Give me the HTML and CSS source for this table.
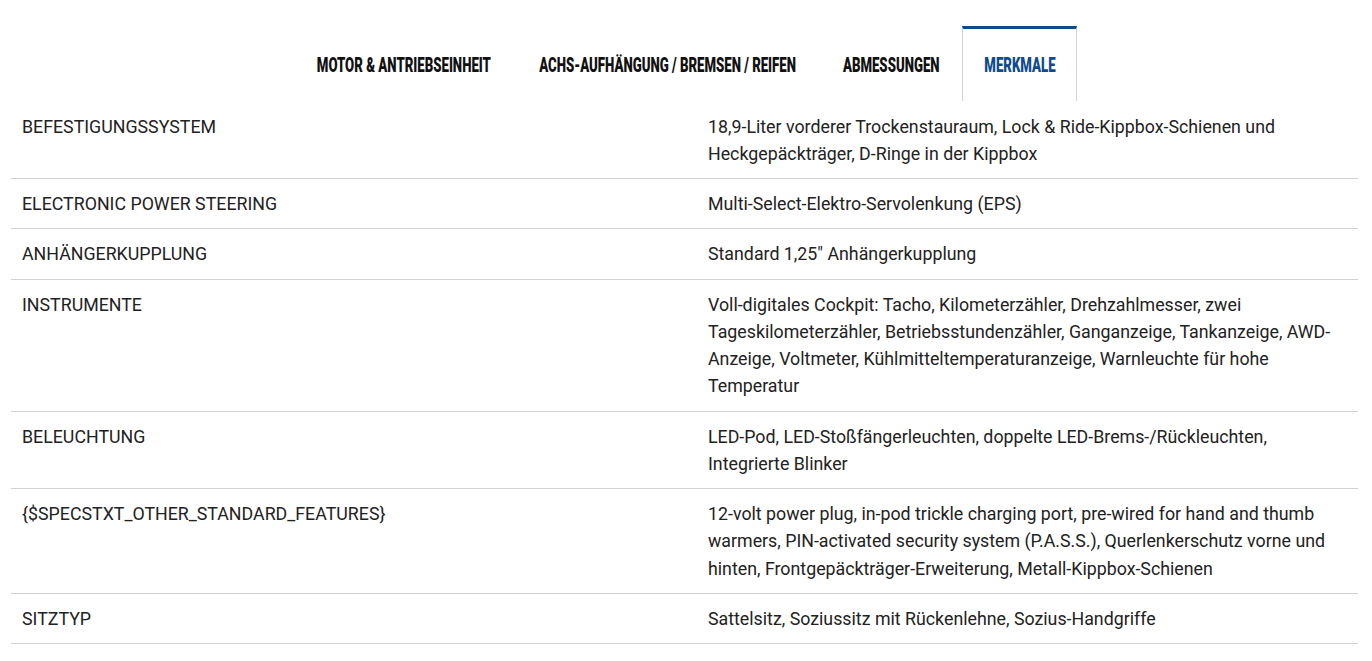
FILE: index.html
```html
<!DOCTYPE html>
<html lang="de">
<head>
<meta charset="utf-8">
<title>Merkmale</title>
<link rel="stylesheet" href="styles.css">
</head>
<body>
<nav class="tabs">
  <div class="tab tab-motor"><span class="tab-label">MOTOR &amp; ANTRIEBSEINHEIT</span></div>
  <div class="tab tab-achs"><span class="tab-label">ACHS-AUFHÄNGUNG / BREMSEN / REIFEN</span></div>
  <div class="tab tab-abm"><span class="tab-label">ABMESSUNGEN</span></div>
  <div class="tab tab-merk active"><span class="tab-label">MERKMALE</span></div>
</nav>
<div class="specs">
  <div class="row"><div class="label">BEFESTIGUNGSSYSTEM</div><div class="value">18,9-Liter vorderer Trockenstauraum, Lock &amp; Ride-Kippbox-Schienen und Heckgepäckträger, D-Ringe in der Kippbox</div></div>
  <div class="row"><div class="label">ELECTRONIC POWER STEERING</div><div class="value">Multi-Select-Elektro-Servolenkung (EPS)</div></div>
  <div class="row"><div class="label">ANHÄNGERKUPPLUNG</div><div class="value">Standard 1,25" Anhängerkupplung</div></div>
  <div class="row"><div class="label">INSTRUMENTE</div><div class="value">Voll-digitales Cockpit: Tacho, Kilometerzähler, Drehzahlmesser, zwei Tageskilometerzähler, Betriebsstundenzähler, Ganganzeige, Tankanzeige, AWD-Anzeige, Voltmeter, Kühlmitteltemperaturanzeige, Warnleuchte für hohe Temperatur</div></div>
  <div class="row"><div class="label">BELEUCHTUNG</div><div class="value">LED-Pod, LED-Stoßfängerleuchten, doppelte LED-Brems-/Rückleuchten, Integrierte Blinker</div></div>
  <div class="row"><div class="label">{$SPECSTXT_OTHER_STANDARD_FEATURES}</div><div class="value">12-volt power plug, in-pod trickle charging port, pre-wired for hand and thumb warmers, PIN-activated security system (P.A.S.S.), Querlenkerschutz vorne und hinten, Frontgepäckträger-Erweiterung, Metall-Kippbox-Schienen</div></div>
  <div class="row"><div class="label">SITZTYP</div><div class="value">Sattelsitz, Soziussitz mit Rückenlehne, Sozius-Handgriffe</div></div>
</div>
</body>
</html>
```
FILE: styles.css
```css
html, body {
  margin: 0;
  padding: 0;
  background: #ffffff;
}
body {
  font-family: Roboto, "Liberation Sans", sans-serif;
  color: #222222;
  padding: 26px 14px 0 11px;
}
.tabs {
  display: flex;
  justify-content: center;
  padding-left: 1px;
}
.tab {
  box-sizing: border-box;
  height: 75px;
  border: 1px solid transparent;
  border-top: 3px solid transparent;
  border-bottom: none;
  display: flex;
  align-items: center;
  justify-content: center;
  font-family: Roboto, "Liberation Sans", sans-serif;
  font-weight: 900;
  font-size: 20px;
  color: #111111;
  white-space: nowrap;
}
.tab-label {
  display: inline-block;
  transform: scaleX(0.66);
  transform-origin: center;
}
.tab-motor { width: 221px; }
.tab-achs { width: 307px; }
.tab-abm { width: 141px; }
.tab-merk { width: 115px; }
.tab.active {
  border-color: #d4d4d4;
  border-top-color: #0e4a8e;
  color: #0e4a8e;
}
.specs {
  display: flex;
  flex-direction: column;
  margin-top: 0.5px;
}
.row {
  display: grid;
  grid-template-columns: 686px 1fr;
  border-bottom: 1px solid #d2d2d2;
  padding: 11px 0;
  font-size: 17.8px;
  line-height: 27.25px;
}
.label,
.value {
  padding-left: 11px;
}
.value {
  padding-right: 11px;
}
```
